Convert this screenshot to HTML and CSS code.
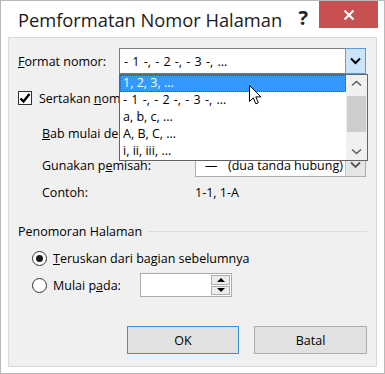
FILE: index.html
```html
<!DOCTYPE html>
<html lang="id">
<head>
    <meta charset="UTF-8">
    <meta name="viewport" content="width=device-width, initial-scale=1.0">
    <title>Pemformatan Nomor Halaman</title>
    <link rel="stylesheet" href="styles.css">
</head>
<body>
    <div class="window">
        <div class="titlebar">
            <span class="title">Pemformatan Nomor Halaman</span>
            <span class="help">?</span>
            <span class="close">
                <svg width="12" height="12" viewBox="0 0 12 12">
                    <path d="M1.5 1.5 L10.5 10.5 M10.5 1.5 L1.5 10.5" stroke="#fff" stroke-width="2.2" fill="none"/>
                </svg>
            </span>
        </div>

        <div class="panel">
            <div class="row row-format">
                <span class="label-format"><u>F</u>ormat nomor:</span>
                <div class="combo combo-main">
                    <span class="combo-text spaced">- 1 -, - 2 -, - 3 -, ...</span>
                    <span class="combo-btn combo-btn-hot">
                        <svg width="11" height="8" viewBox="0 0 11 8">
                            <path d="M1 1.5 L5.5 6 L10 1.5" stroke="#000" stroke-width="2" fill="none"/>
                        </svg>
                    </span>
                </div>
            </div>

            <div class="row check-row">
                <span class="checkbox">
                    <svg width="12" height="12" viewBox="0 0 12 12">
                        <path d="M1.5 6.5 L4.5 9.5 L10.5 2" stroke="#000" stroke-width="2.4" fill="none"/>
                    </svg>
                </span>
                <span class="check-label">Sertakan <u>n</u>omor bab</span>
            </div>

            <div class="row row-sub row-bab">
                <span class="label-sub"><u>B</u>ab mulai dengan gaya:</span>
                <div class="combo combo-sub">
                    <span class="combo-text">Judul 1</span>
                    <span class="combo-btn">
                        <svg width="11" height="8" viewBox="0 0 11 8">
                            <path d="M1 1.5 L5.5 6 L10 1.5" stroke="#555" stroke-width="1.8" fill="none"/>
                        </svg>
                    </span>
                </div>
            </div>

            <div class="row row-sub row-sep">
                <span class="label-sub">Gunakan p<u>e</u>misah:</span>
                <div class="combo combo-sub">
                    <span class="combo-text"><span class="dash">—</span>(dua tanda hubung)</span>
                    <span class="combo-btn">
                        <svg width="11" height="8" viewBox="0 0 11 8">
                            <path d="M1 1.5 L5.5 6 L10 1.5" stroke="#555" stroke-width="1.8" fill="none"/>
                        </svg>
                    </span>
                </div>
            </div>

            <div class="row row-sub row-contoh">
                <span class="label-sub">Contoh:</span>
                <span>1-1, 1-A</span>
            </div>

            <div class="row group-head">
                <span>Penomoran Halaman</span>
                <span class="group-line"></span>
            </div>

            <div class="row radio-row radio-first">
                <span class="radio radio-on"><span class="radio-dot"></span></span>
                <span class="radio-label"><u>T</u>eruskan dari bagian sebelumnya</span>
            </div>

            <div class="row radio-row radio-second">
                <span class="radio"></span>
                <span class="radio-label label-start">Mulai p<u>a</u>da:</span>
                <div class="spin">
                    <span class="spin-field"></span>
                    <span class="spin-btns">
                        <span class="spin-btn"><span class="tri-up"></span></span>
                        <span class="spin-btn"><span class="tri-down"></span></span>
                    </span>
                </div>
            </div>

            <div class="row button-row">
                <button class="btn btn-default">OK</button>
                <button class="btn">Batal</button>
            </div>

            <div class="dropdown">
                <ul class="list">
                    <li class="item item-selected">1, 2, 3, ...</li>
                    <li class="item spaced">- 1 -, - 2 -, - 3 -, ...</li>
                    <li class="item">a, b, c, ...</li>
                    <li class="item">A, B, C, ...</li>
                    <li class="item">i, ii, iii, ...</li>
                </ul>
                <div class="scrollbar">
                    <span class="scroll-arrow">
                        <svg width="11" height="7" viewBox="0 0 11 7">
                            <path d="M1 5.5 L5.5 1.5 L10 5.5" stroke="#606060" stroke-width="1.6" fill="none"/>
                        </svg>
                    </span>
                    <span class="scroll-track"><span class="scroll-thumb"></span></span>
                    <span class="scroll-arrow">
                        <svg width="11" height="7" viewBox="0 0 11 7">
                            <path d="M1 1.5 L5.5 5.5 L10 1.5" stroke="#606060" stroke-width="1.6" fill="none"/>
                        </svg>
                    </span>
                </div>
            </div>

            <svg class="cursor" width="13" height="21" viewBox="0 0 13 21">
                <path d="M0.5 0.5 L0.5 16.5 L4.3 12.8 L6.8 18.8 L9.3 17.8 L6.8 11.9 L12 11.9 Z" fill="#fff" stroke="#000" stroke-width="1"/>
            </svg>
        </div>
    </div>
</body>
</html>
```

FILE: styles.css
```css
body {
    margin: 0;
    font-family: "Open Sans", "Noto Sans", sans-serif;
    font-size: 12.5px;
    color: #000;
}

.window {
    width: 385px;
    height: 374px;
    box-sizing: border-box;
    border: 1px solid #b9b9b9;
    background-color: #fff;
    display: flex;
    flex-direction: column;
}

.titlebar {
    height: 36px;
    display: flex;
    align-items: flex-start;
    flex-shrink: 0;
}

.title {
    font-size: 18.3px;
    line-height: 28px;
    margin: 5px 0 0 17px;
    white-space: nowrap;
    color: #1a1a1a;
}

.help {
    margin: 5px 11px 0 auto;
    font-size: 20px;
    font-weight: bold;
    line-height: 24px;
    color: #222;
}

.close {
    width: 59px;
    height: 27px;
    margin-right: 6px;
    flex-shrink: 0;
    background-color: #c75050;
    display: flex;
    justify-content: center;
    align-items: center;
}

.panel {
    flex: 1;
    margin: 0 7px 6px 7px;
    padding: 0 9px;
    border: 1px solid #d9d9d9;
    background-color: #f0f0f0;
    position: relative;
    display: flex;
    flex-direction: column;
}

.row {
    display: flex;
    align-items: center;
    flex-shrink: 0;
    white-space: nowrap;
}

.row-format {
    height: 26px;
    margin-top: 10px;
}

.label-format {
    width: 101px;
}

.combo {
    box-sizing: border-box;
    height: 100%;
    display: flex;
    align-items: stretch;
    background-color: #fff;
    border: 1px solid #abadb3;
}

.combo-main {
    width: 247px;
    border-color: #7a7a7a;
}

.combo-sub {
    width: 171px;
}

.combo-text {
    flex: 1;
    display: flex;
    align-items: center;
    padding-left: 4px;
    overflow: hidden;
}

.spaced {
    word-spacing: 1px;
}

.combo-btn {
    width: 19px;
    display: flex;
    justify-content: center;
    align-items: center;
    background-color: #e6e6e6;
    border-left: 1px solid #c4c4c4;
}

.combo-btn-hot {
    margin: -1px -1px -1px 0;
    border: 1px solid #569de5;
    background-color: #cce4f7;
}

.check-row {
    height: 20px;
    margin-top: 14px;
}

.checkbox {
    box-sizing: border-box;
    width: 14px;
    height: 14px;
    border: 1px solid #333;
    background-color: #fff;
    display: flex;
    justify-content: center;
    align-items: center;
}

.check-label {
    margin-left: 7px;
}

.row-sub {
    padding-left: 24px;
}

.label-sub {
    width: 153px;
}

.row-bab {
    height: 24px;
    margin-top: 13px;
}

.row-sep {
    height: 24px;
    margin-top: 8px;
}

.row-sep .combo-text {
    padding-left: 9px;
}

.dash {
    width: 23px;
}

.row-contoh {
    height: 18px;
    margin-top: 6px;
}

.group-head {
    height: 18px;
    margin-top: 21px;
}

.group-line {
    flex: 1;
    height: 1px;
    margin-left: 6px;
    background-color: #dcdcdc;
}

.radio-row {
    padding-left: 14px;
}

.radio-first {
    height: 20px;
    margin-top: 8px;
}

.radio-second {
    height: 24px;
    margin-top: 5px;
}

.radio {
    box-sizing: border-box;
    width: 15px;
    height: 15px;
    border: 1px solid #333;
    border-radius: 50%;
    background-color: #fff;
    display: flex;
    justify-content: center;
    align-items: center;
}

.radio-dot {
    width: 7px;
    height: 7px;
    border-radius: 50%;
    background-color: #1a1a1a;
}

.radio-label {
    margin-left: 6px;
}

.label-start {
    width: 87px;
}

.spin {
    box-sizing: border-box;
    width: 92px;
    height: 24px;
    border: 1px solid #abadb3;
    background-color: #fff;
    display: flex;
}

.spin-field {
    flex: 1;
}

.spin-btns {
    width: 19px;
    display: flex;
    flex-direction: column;
    gap: 1px;
    padding: 1px 1px 1px 0;
}

.spin-btn {
    flex: 1;
    border: 1px solid #adadad;
    background-color: #ececec;
    display: flex;
    justify-content: center;
    align-items: center;
}

.tri-up {
    border-left: 4px solid transparent;
    border-right: 4px solid transparent;
    border-bottom: 4px solid #000;
}

.tri-down {
    border-left: 4px solid transparent;
    border-right: 4px solid transparent;
    border-top: 4px solid #000;
}

.button-row {
    height: 28px;
    margin-top: 29px;
    justify-content: flex-end;
    gap: 15px;
}

.btn {
    box-sizing: border-box;
    width: 113px;
    height: 28px;
    font-family: inherit;
    font-size: 12.5px;
    color: #000;
    background-color: #e1e1e1;
    border: 1px solid #adadad;
    padding: 0;
}

.btn-default {
    width: 112px;
    border-color: #3c8fdc;
}

.dropdown {
    position: absolute;
    left: 110px;
    top: 36px;
    width: 249px;
    height: 87px;
    box-sizing: border-box;
    border: 1px solid #646464;
    background-color: #fff;
    display: flex;
}

.list {
    flex: 1;
    list-style: none;
    margin: 0;
    padding: 0;
}

.item {
    box-sizing: border-box;
    height: 17px;
    line-height: 16px;
    padding-left: 3px;
    white-space: nowrap;
}

.item-selected {
    background-color: #3399ff;
    color: #fff;
    outline: 1px dotted #1b5fa8;
    outline-offset: -1px;
}

.scrollbar {
    width: 21px;
    background-color: #f0f0f0;
    display: flex;
    flex-direction: column;
}

.scroll-arrow {
    height: 17px;
    display: flex;
    justify-content: center;
    align-items: center;
}

.scroll-track {
    flex: 1;
    padding: 4px 1px 0 1px;
}

.scroll-thumb {
    display: block;
    height: 36px;
    background-color: #cdcdcd;
}

.cursor {
    position: absolute;
    left: 240px;
    top: 47px;
}
```
